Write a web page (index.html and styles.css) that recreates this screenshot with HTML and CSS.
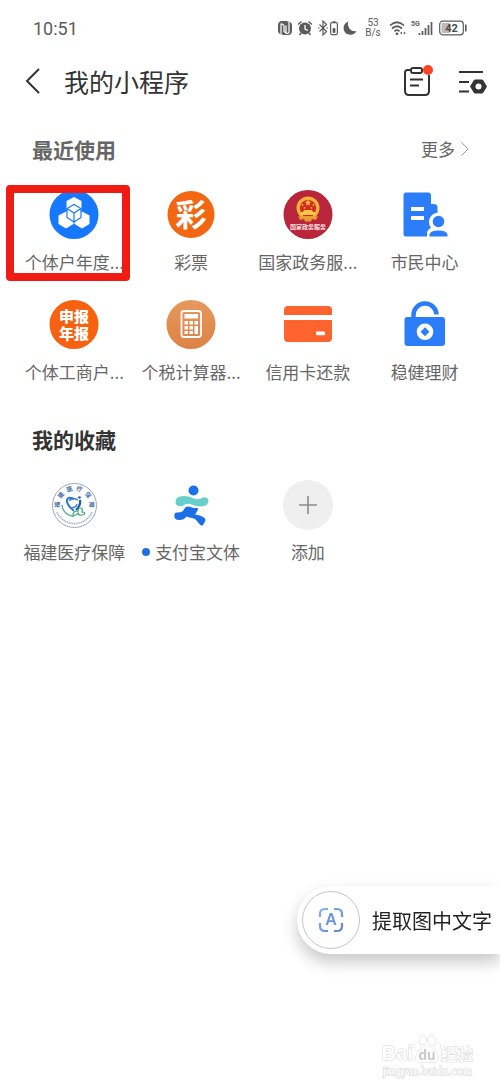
FILE: index.html
```html
<!DOCTYPE html>
<html lang="zh-CN">
  <head>
    <meta charset="UTF-8" />
    <meta name="viewport" content="width=device-width, initial-scale=1.0" />
    <title>我的小程序</title>
    <link rel="stylesheet" href="styles.css">
  </head>
  <body>
    <div class="status-bar">
      <span class="clock">10:51</span>
      <div class="status-icons">
        <!-- nfc -->
        <svg width="14" height="16" viewBox="0 0 14 16">
          <path d="M3 1h5l4 1q2 1 2 3v6q0 3-3 4H6l-4-1q-2-1-2-3V5q0-3 3-4z" fill="#5c5c5c"/>
          <path d="M3 14V4.500q0-1 1-.5l2 1.500v6l2 1.500V5.500M8 13q3 1 3-1V2" fill="none" stroke="#fff" stroke-width="1.2"/>
        </svg>
        <!-- alarm -->
        <svg width="16" height="16" viewBox="0 0 16 16">
          <circle cx="8" cy="8.500" r="6" fill="#5c5c5c"/>
          <path d="M1 4.500L4.500 1.500M15 4.500L11.500 1.500M4 13l-1.500 2M12 13l1.500 2" stroke="#5c5c5c" stroke-width="1.5" fill="none"/>
          <path d="M8 5v4l3 1.500" fill="none" stroke="#fff" stroke-width="1.3"/>
        </svg>
        <!-- bluetooth and its battery -->
        <svg width="20" height="16" viewBox="0 0 20 16">
          <path d="M1.500 4.500l7 7-3.500 3.500V1l3.500 3.500-7 7M0 8h1.500M8.500 8H10" fill="none" stroke="#5c5c5c" stroke-width="1.2"/>
          <rect x="12.600" y="2.600" width="6.800" height="12" rx="1.500" fill="none" stroke="#5c5c5c" stroke-width="1.2"/>
          <path d="M14.500 1.500h3M15 8.500h2v4h-2z" fill="#5c5c5c" stroke="#5c5c5c" stroke-width=".8"/>
        </svg>
        <!-- moon -->
        <svg width="14" height="16" viewBox="0 0 14 16">
          <path d="M5.500 1.500A6.800 6.800 0 1 0 13.500 11 7 7 0 0 1 5.500 1.500z" fill="#5c5c5c"/>
        </svg>
        <span class="speed">53<br>B/s</span>
        <!-- wifi -->
        <svg width="17" height="16" viewBox="0 0 17 16">
          <path d="M1 5.500Q8 -1 15 5.500M3 8.500Q8 4 13 8.500M5.500 11.300Q8 9 10.500 11.300" fill="none" stroke="#5c5c5c" stroke-width="1.700"/>
          <circle cx="8" cy="13.800" r="1.400" fill="#5c5c5c"/>
          <path d="M11 13l2-1.500v3zM16.800 13l-2-1.500v3z" fill="#5c5c5c"/>
        </svg>
        <!-- mobile signal -->
        <svg width="23" height="16" viewBox="0 0 23 16">
          <text x="0" y="6" class="net">5G</text>
          <path d="M8.500 15v-2M11.500 15v-4M14.500 15V8M17.500 15V5M20.500 15V2" stroke="#5c5c5c" stroke-width="1.700"/>
        </svg>
        <!-- battery -->
        <svg width="28" height="16" viewBox="0 0 28 16">
          <rect x=".7" y="1.200" width="23.600" height="13.600" rx="3" fill="#fff" stroke="#5c5c5c" stroke-width="1.200"/>
          <rect x="2.500" y="3" width="8.500" height="10" rx="1" fill="#bbb"/>
          <path d="M26.800 4.500v7" stroke="#5c5c5c" stroke-width="1.600"/>
          <text x="12.500" y="12" text-anchor="middle" class="level">42</text>
        </svg>
      </div>
    </div>

    <header class="header">
      <a href="#" class="back" aria-label="返回">
        <svg width="16" height="28" viewBox="0 0 16 28">
          <path d="M14 2L2 14l12 12" fill="none" stroke="#333" stroke-width="2"/>
        </svg>
      </a>
      <h1>我的小程序</h1>
      <button class="icon-btn" aria-label="待办">
        <svg width="30" height="32" viewBox="0 0 30 32">
          <path d="M7 5H4.500Q2 5 2 8v18q0 4 4 4h16q4 0 4-4V10" fill="none" stroke="#333" stroke-width="2"/>
          <rect x="8" y="3" width="11" height="5" rx="2" fill="#fff" stroke="#333" stroke-width="2"/>
          <path d="M7 14.500h13M7 20.500h9" stroke="#333" stroke-width="2"/>
          <circle cx="25" cy="5" r="5" fill="#fa4522"/>
        </svg>
      </button>
      <button class="icon-btn" aria-label="设置">
        <svg width="30" height="32" viewBox="0 0 30 32">
          <path d="M2 7h24M2 17h10M2 26.500h10" stroke="#333" stroke-width="2"/>
          <path d="M17.500 15h8l4 6.500-4 6.500h-8l-4-6.500z" fill="#333" stroke="#333" stroke-linejoin="round"/>
          <circle cx="21.500" cy="21.500" r="3" fill="#fff"/>
        </svg>
      </button>
    </header>

    <main>
      <section>
        <div class="section-head">
          <h2 class="muted">最近使用</h2>
          <a href="#" class="more">更多
            <svg width="10" height="16" viewBox="0 0 10 16">
              <path d="M1.500 1.500L8 8l-6.500 6.500" fill="none" stroke="#999" stroke-width="1"/>
            </svg>
          </a>
        </div>
        <div class="apps">
          <a href="#" class="app marked">
            <svg class="icon" viewBox="0 0 50 50">
              <circle cx="25" cy="24.500" r="24.500" fill="#1677ff"/>
              <g fill="#fff">
                <path d="M25 7l7.500 4v8.500L25 24l-7.500-4.500V11z"/>
                <path d="M17 21.500l7.500 4V34L17 38.500 9.500 34v-8.500z"/>
                <path d="M33 21.500l7.500 4V34L33 38.500 25.500 34v-8.500z"/>
              </g>
              <path d="M25 14.500l7 4v9l-7 4.500-7-4.500v-9zM18 18.500l7 4.500 7-4.500M25 23v9" fill="#fff" stroke="#1677ff" stroke-width="1.200"/>
            </svg>
            <span class="name">个体户年度...</span>
          </a>
          <a href="#" class="app">
            <svg class="icon" viewBox="0 0 50 50">
              <circle cx="25" cy="24.500" r="23.500" fill="#f36612"/>
              <text x="25" y="36" text-anchor="middle" class="glyph-lg">彩</text>
            </svg>
            <span class="name">彩票</span>
          </a>
          <a href="#" class="app">
            <svg class="icon" viewBox="0 0 50 50">
              <circle cx="25" cy="24.500" r="24.500" fill="#b9253b"/>
              <circle cx="25" cy="18" r="9.800" fill="#d8281e" stroke="#f2b03c" stroke-width="3.400"/>
              <path d="M25 9.500l1 2.300h2.300l-1.800 1.500.7 2.400-2.200-1.400-2.200 1.400.7-2.400-1.800-1.500H24z" fill="#f9c846"/>
              <g fill="#f9c846">
                <circle cx="19.500" cy="15" r=".9"/>
                <circle cx="30.500" cy="15" r=".9"/>
                <circle cx="21.500" cy="17.800" r=".9"/>
                <circle cx="28.500" cy="17.800" r=".9"/>
                <path d="M21 20h8l1 2h2v3H18v-3h2z"/>
              </g>
              <path d="M15 26l5 1.500h10l5-1.500-2 4-4-1-1 2.500h-6L21 29l-4 1z" fill="#e89a32"/>
              <path d="M20 25.700h10" stroke="#b9253b" stroke-width="1"/>
              <text x="25" y="39" text-anchor="middle" class="glyph-xs">国家政务服务</text>
            </svg>
            <span class="name">国家政务服...</span>
          </a>
          <a href="#" class="app">
            <svg class="icon" viewBox="0 0 50 50">
              <path d="M6 2.500h22q3 0 3 3V14h3q3.500 0 3.500 3.500v29H6q-2.500 0-2.500-2.500V5q0-2.500 2.500-2.500z" fill="#2b7dfa"/>
              <path d="M11 19h13M11 28h13" stroke="#fff" stroke-width="4"/>
              <path d="M27 48v-5q0-3 4-5a9.600 9.600 0 1 1 15 0q4 2 4 5v5z" fill="#fff"/>
              <circle cx="38.500" cy="31.500" r="5.800" fill="#2b7dfa"/>
              <path d="M29.500 46.500v-2q1-4 9-4t9 4v2z" fill="#2b7dfa"/>
            </svg>
            <span class="name">市民中心</span>
          </a>
          <a href="#" class="app">
            <svg class="icon" viewBox="0 0 50 50">
              <circle cx="25" cy="24.500" r="24.500" fill="#f7610f"/>
              <text x="25" y="22" text-anchor="middle" class="glyph-md">申报</text>
              <text x="25" y="39" text-anchor="middle" class="glyph-md">年报</text>
            </svg>
            <span class="name">个体工商户...</span>
          </a>
          <a href="#" class="app">
            <svg class="icon" viewBox="0 0 50 50">
              <defs>
                <linearGradient id="tan" x1="0" y1="0" x2="0" y2="1">
                  <stop offset="0" stop-color="#e7995c"/>
                  <stop offset="1" stop-color="#dc8245"/>
                </linearGradient>
              </defs>
              <circle cx="25" cy="24.500" r="24.500" fill="url(#tan)"/>
              <rect x="15.500" y="11" width="19.500" height="26" rx="2.500" fill="none" stroke="#fff" stroke-width="1.800"/>
              <path d="M18.500 14h13.500v4.500H18.500z" fill="#fff"/>
              <path d="M18.500 21h3.500v3.500h-3.500zM23.500 21H27v3.500h-3.500zM28.500 21H32v3.500h-3.500zM18.500 26h3.500v3.500h-3.500zM23.500 26H27v3.500h-3.500zM28.500 26H32v8h-3.500zM18.500 31h3.500v3h-3.500zM23.500 31H27v3h-3.500z" fill="#fff"/>
            </svg>
            <span class="name">个税计算器...</span>
          </a>
          <a href="#" class="app">
            <svg class="icon" viewBox="0 0 50 50">
              <path d="M1 15v-5q0-4 4-4h40q4 0 4 4v5zM1 20h48v18q0 4-4 4H5q-4 0-4-4z" fill="#ff642f"/>
              <rect x="33" y="31.500" width="9" height="3.800" rx="1" fill="#fff"/>
            </svg>
            <span class="name">信用卡还款</span>
          </a>
          <a href="#" class="app">
            <svg class="icon" viewBox="0 0 50 50">
              <path d="M13.500 18v-2.500a11.500 11.500 0 0 1 23-1" fill="none" stroke="#2b7dfa" stroke-width="4.500"/>
              <rect x="4.500" y="17" width="40.500" height="29" rx="3" fill="#2b7dfa"/>
              <circle cx="25" cy="31.800" r="8.300" fill="#fff"/>
              <path d="M25 27.300l4.500 4.500-4.500 4.500-4.500-4.500z" fill="#2b7dfa"/>
            </svg>
            <span class="name">稳健理财</span>
          </a>
        </div>
      </section>

      <section>
        <div class="section-head">
          <h2>我的收藏</h2>
        </div>
        <div class="apps">
          <a href="#" class="app">
            <svg class="icon" viewBox="0 0 50 50">
              <defs>
                <path id="ring" d="M12.500 33A15 15 0 1 1 38.500 33"/>
              </defs>
              <circle cx="25.500" cy="25.500" r="22" fill="#fff" stroke="#8391ae" stroke-width=".8"/>
              <text class="seal"><textPath href="#ring" startOffset="50%" text-anchor="middle">福&ensp;建&ensp;医&ensp;疗&ensp;保&ensp;障</textPath></text>
              <path d="M8 32a19 19 0 0 0 35 0" fill="none" stroke="#94a2ba" stroke-width="1.600" stroke-dasharray="1 .8"/>
              <path d="M13 25q1 10 12 11.500" fill="none" stroke="#4fae8a" stroke-width="1.300"/>
              <path d="M25 19q-6-3-7 1t7 11" fill="none" stroke="#2a76c4" stroke-width="2"/>
              <path d="M20 20.500q5-3 9-.5M28 24q-1 4-5 3.500" fill="none" stroke="#3a86d2" stroke-width="1.500"/>
              <path d="M31 20q1 5-4 10" fill="none" stroke="#2256a8" stroke-width="2.200"/>
              <circle cx="30.500" cy="17.500" r="1.300" fill="#2256a8"/>
              <path d="M24 35q0-4 5-4 0-3 2.500-3t1.500 4q4 0 2 2.500-5 2-6-1.500-1 3-5 2z" fill="none" stroke="#3fa878" stroke-width="1.200"/>
            </svg>
            <span class="name">福建医疗保障</span>
          </a>
          <a href="#" class="app">
            <svg class="icon" viewBox="0 0 50 50">
              <circle cx="27.500" cy="10.500" r="5" fill="#1a72e8"/>
              <path d="M9.500 22q0-6 8-6 5 0 10 2.300t10-1q5 0 5 3.700 0 5-8 5.500-5 0-9-2t-9 1.500q-7 1-7-4z" fill="#67cfcb"/>
              <path d="M8.500 34q0-1.500 2-1.500 6 .5 7.500-3 1-3 4-3 2 0 4 1 2 .8 5 .5 1.500 0 1 1.500-2 4-3 5 6 .5 9.500 3.500 1.500 1.500.5 3.500l-2 3.500q-1 1.200-2.500 0-2-1.500-3.500-4-1.500-2.500-5-3-3-.5-5.500-1.500-2.500 3.500-7 3.500-3 0-4.500-1.500-1-1.500-.5-4.500z" fill="#1a6fe6"/>
            </svg>
            <span class="name"><i class="dot"></i>支付宝文体</span>
          </a>
          <button class="app">
            <svg class="icon" viewBox="0 0 50 50">
              <circle cx="25" cy="25" r="25" fill="#efefef"/>
              <path d="M25 16v18M16 25h18" stroke="#8a8a8a" stroke-width="1.600"/>
            </svg>
            <span class="name">添加</span>
          </button>
        </div>
      </section>
    </main>

    <button class="extract">
      <span class="extract-icon">
        <svg width="26" height="26" viewBox="0 0 26 26">
          <defs>
            <linearGradient id="scan" x1="0" y1="0" x2="1" y2="1">
              <stop offset="0" stop-color="#7fb4ec"/>
              <stop offset="1" stop-color="#6684d6"/>
            </linearGradient>
          </defs>
          <path d="M2 10V7q0-5 5-5h3M16 2h3q5 0 5 5v3M24 16v3q0 5-5 5h-3M10 24H7q-5 0-5-5v-3" fill="none" stroke="url(#scan)" stroke-width="2.200"/>
          <text x="13" y="18" text-anchor="middle" class="scan-letter">A</text>
        </svg>
      </span>
      提取图中文字
    </button>

    <div class="watermark">
      <div class="brand">
        <span>Bai</span>
        <svg width="28" height="30" viewBox="0 0 28 30">
          <g fill="#fff" stroke="#d6d6d6">
            <ellipse cx="10" cy="6" rx="3.500" ry="4.500"/>
            <ellipse cx="18.500" cy="6" rx="3.500" ry="4.500"/>
            <ellipse cx="4" cy="13" rx="3" ry="4"/>
            <ellipse cx="24.500" cy="13" rx="3" ry="4"/>
            <path d="M14 12q4 0 6 4 6 4 5 8-1 5-6 4.500H9Q3 29 2.500 24q0-4 5.500-8 2-4 6-4z"/>
          </g>
          <text x="14" y="26" text-anchor="middle" class="du">du</text>
        </svg>
        <span class="exp">经验</span>
      </div>
      <div class="site">jingyan.baidu.com</div>
    </div>
  </body>
</html>
```
FILE: styles.css
```css
* {
  box-sizing: border-box;
}

body {
  margin: 0;
  min-height: 100vh;
  background: #fff;
  color: #333;
  font-family: "Noto Sans CJK SC", "Noto Sans", sans-serif;
}

a {
  color: inherit;
  text-decoration: none;
}

button {
  padding: 0;
  border: none;
  background: none;
  color: inherit;
  font-family: inherit;
  cursor: pointer;
}

svg {
  display: block;
  flex-shrink: 0;
}

/* status bar */
.status-bar {
  display: flex;
  justify-content: space-between;
  align-items: center;
  height: 56px;
  padding: 0 33px;
  color: #5c5c5c;
  font-family: Roboto, sans-serif;
}

.clock {
  font-size: 18px;
}

.status-icons {
  display: flex;
  align-items: center;
  gap: 5px;
}

.speed {
  width: 22px;
  font-size: 10px;
  line-height: 10px;
  text-align: center;
}

.net {
  font: bold 7px Roboto, sans-serif;
  fill: #5c5c5c;
}

.level {
  font: bold 11px Roboto, sans-serif;
  fill: #4a4a4a;
}

/* header */
.header {
  display: flex;
  align-items: center;
  height: 50px;
  padding: 0 13px 0 25px;
}

.header h1 {
  flex: 1;
  margin: 0;
  font-size: 25px;
  line-height: 34px;
  font-weight: 400;
}

.back {
  margin-right: 23px;
}

.icon-btn {
  margin-left: 24px;
}

/* sections */
main {
  padding: 28px 17px 0 16px;
}

section {
  margin-bottom: 40px;
}

.section-head {
  display: flex;
  justify-content: space-between;
  align-items: center;
  padding: 0 13px 0 16px;
  margin-bottom: 26px;
}

.section-head h2 {
  margin: 0;
  font-size: 21px;
  line-height: 30px;
  font-weight: 700;
}

.section-head .muted {
  color: #666;
}

.more {
  display: flex;
  align-items: center;
  gap: 5px;
  color: #666;
  font-size: 17px;
  line-height: 24px;
}

.apps {
  display: grid;
  grid-template-columns: repeat(4, 1fr);
  row-gap: 26px;
}

.app {
  position: relative;
  display: flex;
  flex-direction: column;
  align-items: center;
  gap: 10px;
}

.icon {
  width: 50px;
  height: 50px;
}

.name {
  display: flex;
  align-items: center;
  color: #666;
  font-size: 17px;
  line-height: 24px;
  white-space: nowrap;
}

.dot {
  width: 8px;
  height: 8px;
  margin-right: 5px;
  border-radius: 50%;
  background: #1f6fe0;
}

.marked::after {
  content: "";
  position: absolute;
  top: -5px;
  right: 3px;
  bottom: -7px;
  left: -10px;
  border: 8px solid #f01c14;
  border-radius: 4px;
}

/* text inside icons */
.glyph-lg {
  font-size: 31px;
  font-weight: 700;
  fill: #fff;
}

.glyph-md {
  font: 900 15px "Liberation Sans", "Noto Sans CJK SC", sans-serif;
  fill: #fff;
}

.glyph-xs {
  font-size: 6px;
  font-weight: 700;
  fill: #fbe3e0;
}

.seal {
  font-size: 6px;
  font-weight: 700;
  fill: #4a6ea8;
}

.scan-letter {
  font: bold 16px "Liberation Sans", sans-serif;
  fill: #6b97e0;
}

/* floating button */
.extract {
  position: fixed;
  right: 0;
  bottom: 130px;
  display: flex;
  align-items: center;
  gap: 12px;
  padding: 5px 8px 5px 5px;
  border-radius: 34px 0 0 34px;
  background: #fff;
  box-shadow: 0 8px 16px rgba(0, 0, 0, 0.22);
  color: #222;
  font-size: 20px;
}

.extract-icon {
  display: flex;
  align-items: center;
  justify-content: center;
  width: 58px;
  height: 58px;
  border: 1px solid #c4c4cc;
  border-radius: 50%;
}

/* watermark */
.watermark {
  position: fixed;
  right: 27px;
  bottom: 6px;
  color: #fff;
  text-align: center;
  -webkit-text-stroke: 1px #d6d6d6;
  paint-order: stroke fill;
}

.brand {
  display: flex;
  align-items: flex-end;
  font: bold 20px/22px "Liberation Sans", sans-serif;
}

.exp {
  font: bold 16px/22px "Noto Sans CJK SC", sans-serif;
}

.du {
  font: bold 14px "Liberation Sans", sans-serif;
  fill: #c8c8c8;
  -webkit-text-stroke: 0;
}

.site {
  font: 12px/14px "Liberation Serif", serif;
}
```
